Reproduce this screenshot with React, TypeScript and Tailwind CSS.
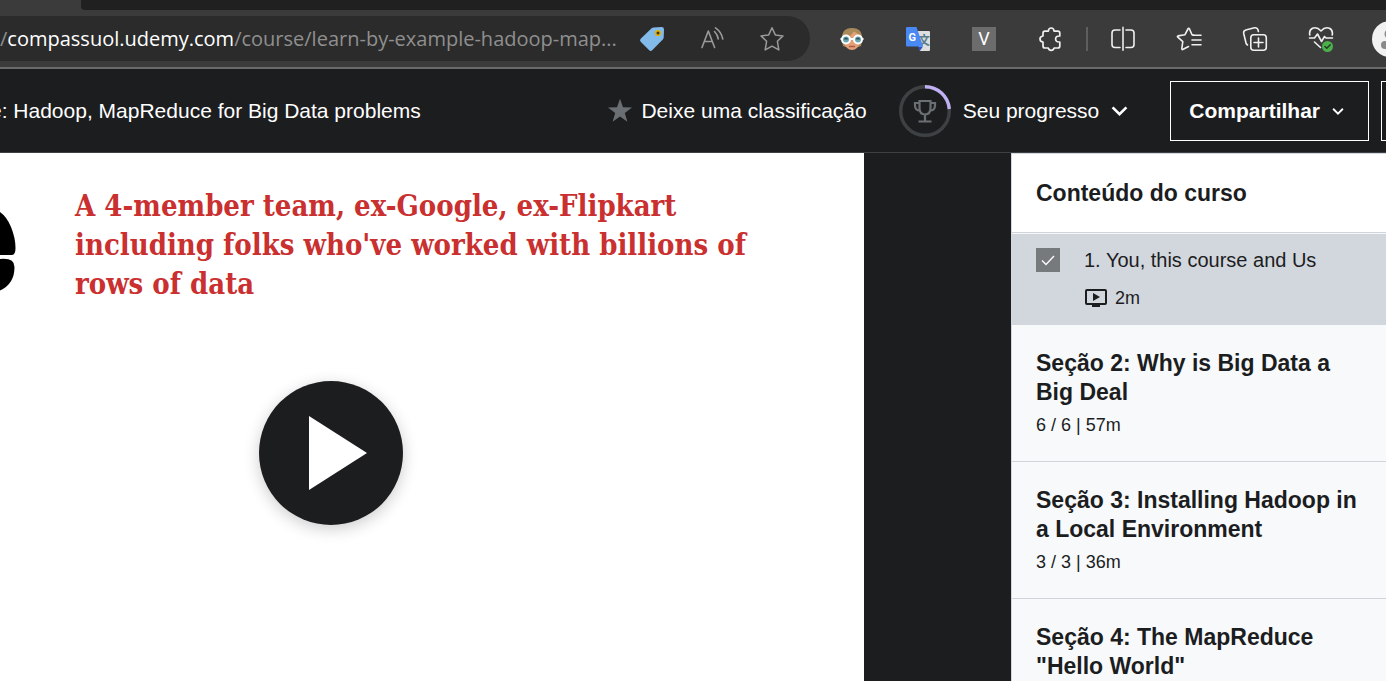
import React from "react";

const stroke = {
  fill: "none",
  stroke: "currentColor",
  strokeLinecap: "round" as const,
  strokeLinejoin: "round" as const,
};

function TagIcon() {
  return (
    <svg width="26" height="26" viewBox="0 0 26 26" aria-hidden="true">
      <path d="M14.6 1.6 L22.6 1 Q25 1 25 3.400 L24.700 11.500 Q24.600 12.600 23.800 13.400 L13.200 24.300 Q11.700 25.700 10.200 24.300 L1.700 15.800 Q.3 14.300 1.700 12.800 L12.600 2.300 Q13.500 1.600 14.600 1.600Z" fill="#82bbe9" />
      <circle cx="19" cy="7" r="2.300" fill="#3b3420" stroke="#e6b000" strokeWidth="1.600" />
    </svg>
  );
}

function ReadAloudIcon() {
  return (
    <svg width="26" height="26" viewBox="0 0 26 26" strokeWidth="1.600" {...stroke} aria-hidden="true">
      <path d="M3 21.500 L9.300 5 L15.600 21.500 M5.300 15.500 H13.400" />
      <path d="M15.500 5.500 Q18.500 8.500 19.300 13 M16.500 1.800 Q22.500 6 23.800 13" />
    </svg>
  );
}

function StarOutlineIcon() {
  return (
    <svg width="26" height="26" viewBox="0 0 26 26" strokeWidth="1.500" {...stroke} aria-hidden="true">
      <path d="M13 1.800 L16.300 8.900 L24 9.900 L18.400 15.300 L19.800 23.900 L13 20.200 L6.200 23.900 L7.600 15.300 L2 9.900 L9.700 8.900Z" />
    </svg>
  );
}

function GogglesIcon() {
  return (
    <svg width="24" height="24" viewBox="0 0 24 24" aria-hidden="true">
      <path d="M2 13 Q1 1 12 1 Q23 1 22 13 L21 19 L18 20 H6 L3 19Z" fill="#a98b5b" />
      <path d="M4 11 Q11 10 13.500 4.500 Q19 6 20 11 V15 Q18 23 12 23 Q6 23 4 15Z" fill="#e3a078" />
      <path d="M9 19.500 H15" stroke="#a85c48" strokeWidth="1.500" />
      <path d="M0.500 12 H23.500" stroke="#fff" strokeWidth="2" />
      <circle cx="6" cy="12.500" r="4" fill="#6aa7b2" stroke="#fff" strokeWidth="2" />
      <circle cx="18" cy="12.500" r="4" fill="#6aa7b2" stroke="#fff" strokeWidth="2" />
      <path d="M4 12.500 a2 2 0 0 1 4 0Z M16 12.500 a2 2 0 0 1 4 0Z" fill="#31515a" />
    </svg>
  );
}

function TranslateIcon() {
  return (
    <svg width="26" height="26" viewBox="0 0 26 26" aria-hidden="true">
      <path d="M10 5 H24 Q25 5 25 6 V24 Q25 25 24 25 H15Z" fill="#dcdedf" />
      <text x="13" y="19" fontSize="12" fontWeight="700" fontFamily="Noto Sans CJK SC, sans-serif" fill="#5b7d8c">文</text>
      <path d="M13 20.500 H18 L14.800 25Z" fill="#2c4fc4" />
      <path d="M2 1 H11.500 L18.200 20.500 H2 Q1 20.500 1 19.500 V2 Q1 1 2 1Z" fill="#4889f4" />
      <text x="3.500" y="14.500" fontSize="11" fontWeight="700" fontFamily="Roboto, sans-serif" fill="#fff">G</text>
    </svg>
  );
}

function PuzzleIcon() {
  return (
    <svg width="26" height="26" viewBox="0 0 26 26" strokeWidth="1.700" {...stroke} aria-hidden="true">
      <path d="M8 5.200 H11.300 Q11.600 2 14.200 2 Q16.800 2 17.100 5.200 H20.800 Q22.800 5.200 22.800 7.200 V10 Q18.600 9.800 18.600 13 Q18.600 16.200 22.800 16 V20 Q22.800 22 20.800 22 H17.100 Q16.500 24.400 14.200 24.400 Q11.900 24.400 11.300 22 H8 Q6 22 6 20 V16 Q3 15.600 3 13 Q3 10.400 6 10 V7.200 Q6 5.200 8 5.200Z" />
    </svg>
  );
}

function SplitIcon() {
  return (
    <svg width="26" height="26" viewBox="0 0 26 26" strokeWidth="1.600" {...stroke} aria-hidden="true">
      <path d="M10 4 H5 Q2 4 2 7 V18.500 Q2 21.500 5 21.500 H10 M16 4 H21 Q24 4 24 7 V18.500 Q24 21.500 21 21.500 H16" />
      <path d="M13 1.500 V24" stroke="#c8c8c8" strokeWidth="2" />
    </svg>
  );
}

function FavoritesIcon() {
  return (
    <svg width="26" height="26" viewBox="0 0 26 26" strokeWidth="1.600" {...stroke} aria-hidden="true">
      <path d="M17.500 9 L16 8.700 L13.500 3 Q12.700 1.500 11.900 3 L9 8.700 L2 9.900 Q.9 10.300 1.800 11.200 L6.800 15.700 L5.800 22.600 Q5.800 24.200 7.200 23.300 L12.500 20.500" />
      <path d="M17 9.300 H25 M16 14 H25 M16 18.700 H25" />
    </svg>
  );
}

function CollectionsIcon() {
  return (
    <svg width="26" height="26" viewBox="0 0 26 26" strokeWidth="1.600" {...stroke} aria-hidden="true">
      <path d="M5.500 19 Q4.300 18.300 4 17 L1.700 7.500 Q1.200 4.800 3.800 4 L12.500 1.800 Q15.300 1.200 16 3.800 L16.400 5.500" />
      <rect x="8.800" y="8.800" width="15.500" height="15.500" rx="3" />
      <path d="M16.500 12 V21 M12 16.500 H21" />
    </svg>
  );
}

function HealthIcon() {
  return (
    <svg width="26" height="28" viewBox="0 0 26 28" strokeWidth="1.600" {...stroke} aria-hidden="true">
      <path d="M1.800 10 Q.8 5.500 4.500 3.300 Q9 1.500 13 6 Q17 1.500 21.500 3.300 Q25.200 5.500 24.200 10" />
      <path d="M1.500 13 H6.500 L9.500 9 L13.500 16.500 L16.500 11.500 L18 13 H24.500 M6.500 17 L12.500 22.500" />
      <circle cx="19.500" cy="21.500" r="5.500" fill="#4bb04b" stroke="none" />
      <path d="M17 21.500 L18.800 23.300 L22.200 19.800" stroke="#253b25" strokeWidth="1.500" />
    </svg>
  );
}

function TrophyRing() {
  return (
    <svg width="52" height="54" viewBox="0 0 52 54" fill="none" aria-hidden="true">
      <circle cx="26" cy="27" r="24.300" stroke="#3e4143" strokeWidth="3.400" />
      <path d="M26 2.700 A24.300 24.300 0 0 1 50.300 25" stroke="#c0b0f5" strokeWidth="3.400" />
      <g stroke="#6a6f73" strokeWidth="2.200">
        <path d="M20.500 17 H31.500 V24 Q31.500 30.500 26 30.500 Q20.500 30.500 20.500 24Z M26 30.500 V37 M19.500 37.500 H32.500" />
        <path d="M20.500 19 H16 V21.500 Q16 26.500 21 26.500 M31.500 19 H36 V21.500 Q36 26.500 31 26.500" />
      </g>
    </svg>
  );
}

function Chevron({ size }: { size: number }) {
  return (
    <svg width={size} height={size} viewBox="0 0 16 16" strokeWidth="2.400" fill="none" stroke="currentColor" aria-hidden="true">
      <path d="M1.500 5 L8 11.500 L14.500 5" />
    </svg>
  );
}

const extensions = [
  { label: "Goggles", icon: <GogglesIcon /> },
  { label: "Tradutor", icon: <TranslateIcon /> },
  {
    label: "V",
    icon: <span className="flex size-6 items-center justify-center bg-[#6c6c6c] font-['Roboto',sans-serif] text-lg text-white">V</span>,
  },
  { label: "Extensões", icon: <PuzzleIcon /> },
];

const tools = [
  { label: "Dividir tela", icon: <SplitIcon /> },
  { label: "Favoritos", icon: <FavoritesIcon /> },
  { label: "Coleções", icon: <CollectionsIcon /> },
  { label: "Desempenho", icon: <HealthIcon /> },
];

const addressActions = [
  { label: "Cupons", icon: <TagIcon /> },
  { label: "Ler em voz alta", icon: <ReadAloudIcon /> },
  { label: "Adicionar aos favoritos", icon: <StarOutlineIcon /> },
];

const sections = [
  { lines: ["Seção 2: Why is Big Data a", "Big Deal"], meta: "6 / 6 | 57m" },
  { lines: ["Seção 3: Installing Hadoop in", "a Local Environment"], meta: "3 / 3 | 36m" },
  { lines: ["Seção 4: The MapReduce", "\"Hello World\""], meta: "" },
];

function ToolButton({ label, children }: { label: string; children: React.ReactNode }) {
  return (
    <button type="button" aria-label={label} className="flex w-[66px] shrink-0 items-center justify-center text-[#f0f0f0]">
      {children}
    </button>
  );
}

function BrowserBar() {
  return (
    <div className="shrink-0 border-b-2 border-[#6b6b6b] bg-[#3b3b3b]">
      <div className="flex h-[10px] pl-[81px]">
        <div className="flex-1 rounded-bl bg-[#202020]" />
      </div>
      <div className="flex items-stretch py-[6px]">
        <div className="flex h-[45px] min-w-0 flex-1 items-center rounded-r-full bg-[#2b2b2b] pr-2">
          <button type="button" className="min-w-0 flex-1 overflow-hidden whitespace-nowrap text-left font-['Open_Sans','Noto_Sans',sans-serif] text-[20px] leading-7 text-[#8f8f8f]">
            /<span className="text-white">compassuol.udemy.com</span>/course/learn-by-example-hadoop-map...
          </button>
          {addressActions.map((a) => (
            <button key={a.label} type="button" aria-label={a.label} className="flex w-[60px] shrink-0 items-center justify-center text-[#9a9a9a]">
              {a.icon}
            </button>
          ))}
        </div>
        <div className="ml-[9px] flex">
          {extensions.map((e) => (
            <ToolButton key={e.label} label={e.label}>{e.icon}</ToolButton>
          ))}
          <div className="ml-[3px] mr-[2px] w-[2px] self-center bg-[#5e5e5e] py-3" />
          {tools.map((t) => (
            <ToolButton key={t.label} label={t.label}>{t.icon}</ToolButton>
          ))}
        </div>
        <button type="button" aria-label="Perfil" className="ml-[18px] flex w-[14px] items-center overflow-hidden">
          <svg width="36" height="36" viewBox="0 0 36 36" className="shrink-0" aria-hidden="true">
            <circle cx="18" cy="18" r="18" fill="#f2f2f2" />
            <circle cx="18" cy="13" r="5.500" fill="#8a8a8a" />
            <rect x="9" y="20" width="18" height="8" rx="4" fill="#8a8a8a" />
          </svg>
        </button>
      </div>
    </div>
  );
}

function CourseHeader() {
  return (
    <header className="flex h-[84px] shrink-0 items-center border-b border-[#3e4143] bg-[#1c1d1f] text-[21px] leading-7 text-white">
      <h1 className="-ml-[10px] min-w-0 flex-1 whitespace-nowrap">e: Hadoop, MapReduce for Big Data problems</h1>
      <button type="button" className="flex shrink-0 items-center gap-2">
        <svg width="26" height="26" viewBox="0 0 26 26" aria-hidden="true">
          <path d="M13 .8 L16 9.300 L25 9.500 L17.800 15 L20.400 23.700 L13 18.600 L5.600 23.700 L8.200 15 L1 9.500 L10 9.300Z" fill="#6a6f73" />
        </svg>
        Deixe uma classificação
      </button>
      <button type="button" className="ml-8 flex shrink-0 items-center gap-3">
        <TrophyRing />
        Seu progresso
        <Chevron size={17} />
      </button>
      <button type="button" className="ml-[42px] flex h-[60px] shrink-0 items-center gap-3 border border-white pl-[18px] pr-6 font-bold">
        Compartilhar
        <Chevron size={12} />
      </button>
      <button type="button" aria-label="Mais opções" className="ml-3 h-[60px] w-[5px] shrink-0 border-y border-l border-white" />
    </header>
  );
}

function Video() {
  return (
    <section className="relative min-w-0 flex-1 overflow-hidden bg-white pt-[34px]">
      <svg width="17" height="82" viewBox="0 0 17 82" className="absolute left-0 top-[57px]" aria-hidden="true">
        <path d="M0 2 Q7 7 11 17 Q15.500 28 15.500 38 Q15.500 45 12 45 H0Z" />
        <path d="M0 49 Q14.500 47.500 14.500 57 Q14.500 74 0 80.500Z" />
      </svg>
      <p className="whitespace-nowrap pl-[75px] font-['DejaVu_Serif_Condensed','DejaVu_Serif',serif] text-[29px] font-bold leading-[39px] text-[#c9302f]">
        A 4-member team, ex-Google, ex-Flipkart<br />
        including folks who've worked with billions of<br />
        rows of data
      </p>
      <button
        type="button"
        aria-label="Reproduzir"
        className="ml-[259px] mt-[77px] flex size-36 items-center justify-center rounded-full bg-[#1c1d1f] shadow-[0_4px_16px_rgba(0,0,0,0.2)]"
      >
        <svg width="144" height="144" viewBox="0 0 144 144" aria-hidden="true">
          <path d="M50 35 L108 72 L50 109Z" fill="#fff" />
        </svg>
      </button>
    </section>
  );
}

function Sidebar() {
  return (
    <aside className="w-[375px] shrink-0 border-l border-t border-[#d1d7dc] bg-[#f7f9fa] text-[#1c1d1f]">
      <h2 className="mb-px border-b border-[#d1d5db] bg-white px-6 pb-[25px] pt-[25px] text-[23px] font-bold leading-7">Conteúdo do curso</h2>
      <div className="flex gap-6 bg-[#d2d6dd] px-6 pb-[15px] pt-3">
        <span className="mt-[2px] grid size-6 shrink-0">
          <input id="lesson-1" type="checkbox" defaultChecked className="col-start-1 row-start-1 size-6 appearance-none bg-[#777a7c]" />
          <svg width="24" height="24" viewBox="0 0 24 24" className="pointer-events-none col-start-1 row-start-1" aria-hidden="true">
            <path d="M6 12.500 L10 16.500 L18 8" fill="none" stroke="#fff" strokeWidth="1.300" />
          </svg>
        </span>
        <div>
          <label htmlFor="lesson-1" className="block whitespace-nowrap text-[20px] leading-7">1. You, this course and Us</label>
          <div className="mt-3 flex items-center gap-[7px] text-[18px] leading-6">
            <svg width="24" height="22" viewBox="0 0 24 22" aria-hidden="true">
              <rect x="2" y="3" width="20" height="14" rx="1" fill="none" stroke="currentColor" strokeWidth="2" />
              <path d="M8 17 H16 V20 H8Z M9 6 L16 10 L9 14Z" fill="currentColor" />
            </svg>
            2m
          </div>
        </div>
      </div>
      {sections.map((s) => (
        <section key={s.meta} className="border-b border-[#d1d5db] px-6 py-6">
          <h3 className="whitespace-nowrap text-[23px] font-bold leading-[29px]">
            {s.lines[0]}<br />{s.lines[1]}
          </h3>
          <p className="mt-[6px] text-[18px] leading-6">{s.meta}</p>
        </section>
      ))}
    </aside>
  );
}

export default function App() {
  return (
    <div className="flex h-screen flex-col overflow-hidden bg-[#1c1d1f] font-['Liberation_Sans',Arial,sans-serif]">
      <BrowserBar />
      <CourseHeader />
      <main className="flex min-h-0 flex-1 overflow-hidden">
        <Video />
        <div className="w-[147px] shrink-0" />
        <Sidebar />
      </main>
    </div>
  );
}
